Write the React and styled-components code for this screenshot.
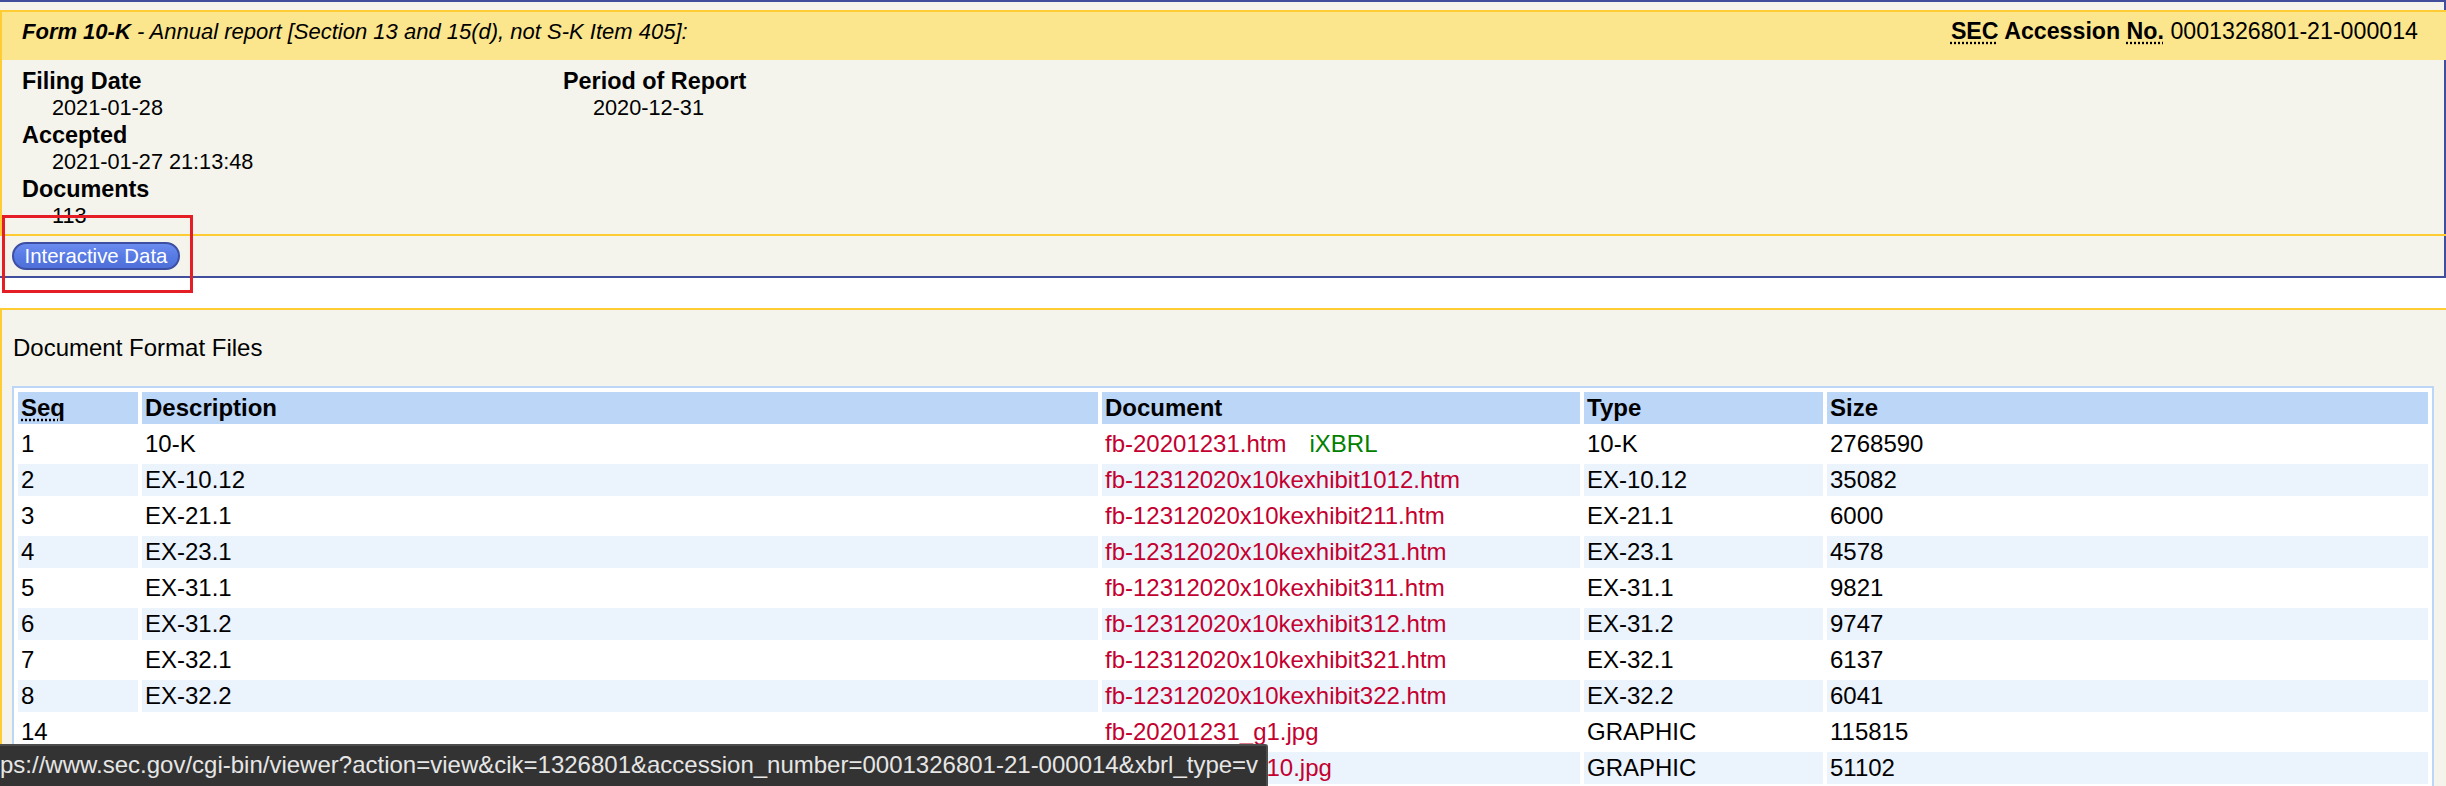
import React from "react";
import styled, { createGlobalStyle } from "styled-components";

const GlobalStyle = createGlobalStyle`
  html, body { margin: 0; padding: 0; overflow: hidden; background: #ffffff; }
  body { font-family: "Liberation Sans", Arial, sans-serif; color: #000; }
`;

const Page = styled.div`
  position: relative;
  width: 2446px;
`;

const FormDiv = styled.div`
  background: #f4f4ec;
  border-top: 2px solid #404e9b;
  border-right: 2px solid #404e9b;
  border-bottom: 2px solid #404e9b;
  padding-top: 8px;
`;

const FormBox = styled.div`
  border-top: 2px solid #ffcc33;
  border-left: 2px solid #ffcc33;
  border-bottom: 2px solid #ffcc33;
  margin-right: -2px;
`;

const FormHeader = styled.div`
  display: flex;
  justify-content: space-between;
  align-items: baseline;
  height: 48px;
  box-sizing: border-box;
  padding: 6px 28px 0 20px;
  background: #fce68d;
`;

const FormName = styled.div`
  font-size: 22px;
  line-height: 25px;
  font-style: italic;
  strong { font-weight: bold; }
`;

const SecNum = styled.div`
  font-size: 23.2px;
  line-height: 26px;
  strong { font-weight: bold; }
`;

const Abbr = styled.abbr`
  text-decoration: underline dotted;
  text-underline-offset: 3px;
  cursor: help;
`;

const Info = styled.div`
  display: flex;
  height: 174px;
  box-sizing: border-box;
  padding: 7px 0 5px 20px;
`;

const FormGrouping = styled.div`
  width: ${(p) => p.$width || "auto"};
  display: flex;
  flex-direction: column;
`;

const InfoHead = styled.div`
  font-weight: bold;
  font-size: 23.4px;
  line-height: 28px;
`;

const InfoValue = styled.div`
  font-size: 21.7px;
  line-height: 26px;
  margin-left: 30px;
`;

const ButtonBar = styled.div`
  height: 40px;
  box-sizing: border-box;
  padding: 6px 0 6px 12px;
  display: flex;
  align-items: center;
`;

const IDButton = styled.button`
  width: 168px;
  height: 28px;
  box-sizing: border-box;
  padding: 0;
  border: 2px solid #3d4fa3;
  border-radius: 14px;
  background: linear-gradient(#6a8cf0, #5679e3 55%, #4f70d8);
  color: #ffffff;
  font-family: "Liberation Sans", Arial, sans-serif;
  font-size: 20.4px;
  line-height: 24px;
  text-align: center;
  cursor: pointer;
`;

const FilesBox = styled.div`
  margin-top: 30px;
  border-top: 2px solid #ffcc33;
  border-left: 2px solid #ffcc33;
  background: #f4f4ec;
  padding: 24px 12px 0 10px;
`;

const SectionTitle = styled.div`
  font-size: 24px;
  line-height: 28px;
  margin: 0 0 24px 1px;
`;

const FileTable = styled.table`
  width: 2422px;
  box-sizing: border-box;
  table-layout: fixed;
  border: 2px solid #bcd6f8;
  border-collapse: separate;
  border-spacing: 4px;
  background: #ffffff;
`;

const Th = styled.th`
  width: ${(p) => p.$w || "auto"};
  box-sizing: border-box;
  background: #bcd6f8;
  font-weight: bold;
  font-size: 24px;
  line-height: 28px;
  padding: 2px 3px;
  text-align: left;
`;

const Row = styled.tr`
  background: ${(p) => (p.$alt ? "#ebf3fd" : "#ffffff")};
`;

const Td = styled.td`
  font-size: 24px;
  line-height: 28px;
  padding: 2px 3px;
  text-align: left;
  white-space: nowrap;
  overflow: hidden;
`;

const DocLink = styled.a`
  color: #c3002f;
  text-decoration: none;
`;

const Badge = styled.span`
  color: #008000;
  margin-left: 23px;
`;

const Annotation = styled.div`
  position: absolute;
  left: 2px;
  top: 215px;
  width: 191px;
  height: 78px;
  box-sizing: border-box;
  border: 3px solid #e51e25;
  pointer-events: none;
`;

const StatusBubble = styled.div`
  position: fixed;
  left: 0;
  bottom: 0;
  width: 1268px;
  height: 42px;
  box-sizing: border-box;
  background: #333333;
  border-top: 2px solid #4d4d4d;
  border-right: 2px solid #4d4d4d;
  border-top-right-radius: 3px;
  color: #e6e6e6;
  font-family: "Liberation Sans", Arial, sans-serif;
  font-size: 24px;
  line-height: 28px;
  padding-top: 5px;
  white-space: nowrap;
  overflow: hidden;
`;

const rows = [
  ["1", "10-K", "fb-20201231.htm", "10-K", "2768590", true],
  ["2", "EX-10.12", "fb-12312020x10kexhibit1012.htm", "EX-10.12", "35082"],
  ["3", "EX-21.1", "fb-12312020x10kexhibit211.htm", "EX-21.1", "6000"],
  ["4", "EX-23.1", "fb-12312020x10kexhibit231.htm", "EX-23.1", "4578"],
  ["5", "EX-31.1", "fb-12312020x10kexhibit311.htm", "EX-31.1", "9821"],
  ["6", "EX-31.2", "fb-12312020x10kexhibit312.htm", "EX-31.2", "9747"],
  ["7", "EX-32.1", "fb-12312020x10kexhibit321.htm", "EX-32.1", "6137"],
  ["8", "EX-32.2", "fb-12312020x10kexhibit322.htm", "EX-32.2", "6041"],
  ["14", "", "fb-20201231_g1.jpg", "GRAPHIC", "115815"],
  ["15", "", "fb-20201231_g10.jpg", "GRAPHIC", "51102"],
];

export default function App() {
  return (
    <Page>
      <GlobalStyle />
      <FormDiv>
        <FormBox>
          <FormHeader>
            <FormName>
              <strong>Form 10-K</strong> - Annual report [Section 13 and 15(d), not S-K Item 405]:
            </FormName>
            <SecNum>
              <strong>
                <Abbr title="Securities and Exchange Commission">SEC</Abbr> Accession{" "}
                <Abbr title="Number">No.</Abbr>
              </strong>{" "}
              0001326801-21-000014
            </SecNum>
          </FormHeader>
          <Info>
            <FormGrouping $width="541px">
              <InfoHead>Filing Date</InfoHead>
              <InfoValue>2021-01-28</InfoValue>
              <InfoHead>Accepted</InfoHead>
              <InfoValue>2021-01-27 21:13:48</InfoValue>
              <InfoHead>Documents</InfoHead>
              <InfoValue>113</InfoValue>
            </FormGrouping>
            <FormGrouping>
              <InfoHead>Period of Report</InfoHead>
              <InfoValue>2020-12-31</InfoValue>
            </FormGrouping>
          </Info>
        </FormBox>
        <ButtonBar>
          <IDButton type="button">Interactive Data</IDButton>
        </ButtonBar>
      </FormDiv>

      <FilesBox>
        <SectionTitle>Document Format Files</SectionTitle>
        <FileTable>
          <thead>
            <tr>
              <Th $w="120px">
                <Abbr title="Sequence Number">Seq</Abbr>
              </Th>
              <Th $w="956px">Description</Th>
              <Th $w="478px">Document</Th>
              <Th $w="239px">Type</Th>
              <Th>Size</Th>
            </tr>
          </thead>
          <tbody>
            {rows.map(([seq, desc, doc, type, size, ix], i) => (
              <Row key={seq} $alt={i % 2 === 1}>
                <Td>{seq}</Td>
                <Td>{desc}</Td>
                <Td>
                  <DocLink href="#">{doc}</DocLink>
                  {ix && <Badge>iXBRL</Badge>}
                </Td>
                <Td>{type}</Td>
                <Td>{size}</Td>
              </Row>
            ))}
          </tbody>
        </FileTable>
      </FilesBox>

      <Annotation />
      <StatusBubble>
        ps://www.sec.gov/cgi-bin/viewer?action=view&amp;cik=1326801&amp;accession_number=0001326801-21-000014&amp;xbrl_type=v
      </StatusBubble>
    </Page>
  );
}
